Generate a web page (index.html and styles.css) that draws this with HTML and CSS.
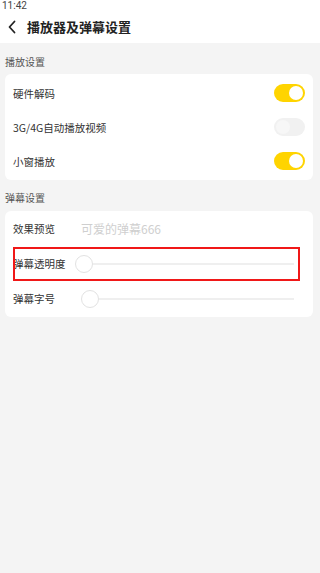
FILE: index.html
```html
<!DOCTYPE html>
<html lang="zh-CN">
<head>
<meta charset="utf-8">
<link rel="stylesheet" href="styles.css">
</head>
<body>
<div class="top">
  <div class="status">11:42</div>
  <div class="header">
    <svg class="back" width="8" height="14" viewBox="0 0 8 14"><path d="M6.5 1.5 L1.5 7 L6.5 12.5" fill="none" stroke="#222" stroke-width="1.8" stroke-linecap="round" stroke-linejoin="round"/></svg>
    <div class="title">播放器及弹幕设置</div>
  </div>
</div>
<div class="section-label first">播放设置</div>
<div class="card card-a">
  <div class="row row-a"><span class="label">硬件解码</span><span class="toggle on"><span class="knob"></span></span></div>
  <div class="row row-a"><span class="label">3G/4G自动播放视频</span><span class="toggle off"><span class="knob"></span></span></div>
  <div class="row row-a"><span class="label">小窗播放</span><span class="toggle on"><span class="knob"></span></span></div>
</div>
<div class="section-label">弹幕设置</div>
<div class="card card-b">
  <div class="row row-b"><span class="label">效果预览</span><span class="preview">可爱的弹幕666</span></div>
  <div class="row row-b highlight-row"><span class="label">弹幕透明度</span><span class="slider s1"><span class="thumb"></span><span class="track"></span></span><span class="highlight"></span></div>
  <div class="row row-b"><span class="label">弹幕字号</span><span class="slider s2"><span class="thumb"></span><span class="track"></span></span></div>
</div>
</body>
</html>
```
FILE: styles.css
```css
* { box-sizing: border-box; }
html, body { margin: 0; padding: 0; }
body {
  width: 320px;
  height: 573px;
  background: #f4f4f4;
  font-family: "Noto Sans CJK SC", "Noto Sans", sans-serif;
  color: #333;
  overflow: hidden;
}
.top { background: #fff; height: 43px; }
.status {
  font-family: Roboto, "Noto Sans", sans-serif;
  font-size: 10px;
  line-height: 11px;
  color: #444;
  padding-left: 2px;
}
.header {
  display: flex;
  align-items: center;
  height: 32px;
  padding-left: 8px;
  padding-bottom: 1px;
}
.back { margin-right: 11px; }
.title {
  font-size: 13px;
  font-weight: 700;
  color: #222;
  line-height: 18px;
}
.section-label {
  font-size: 10px;
  color: #555;
  line-height: 12px;
  padding-left: 5px;
  margin-top: 12px;
  margin-bottom: 7px;
}
.section-label.first { margin-top: 13px; margin-bottom: 6px; }
.card {
  background: #fff;
  margin: 0 7px 0 5px;
  border-radius: 6px;
}
.card-a { padding: 2px 0; }
.card-b { padding: 0 0 1px 0; }
.row {
  display: flex;
  align-items: center;
  padding-left: 8px;
  position: relative;
}
.row-a { height: 34px; padding-right: 8px; justify-content: space-between; }
.row-b { height: 35px; padding-right: 19px; }
.label { font-size: 10.5px; color: #333; }
.preview { font-size: 12px; color: #cfcfcf; margin-left: 26px; }
.toggle {
  width: 31px;
  height: 18px;
  border-radius: 9px;
  position: relative;
  display: block;
}
.toggle.on { background: #ffd400; }
.toggle.off { background: #f1f1f1; }
.knob {
  position: absolute;
  top: 2px;
  width: 14px;
  height: 14px;
  border-radius: 50%;
}
.toggle.on .knob { right: 2px; background: #fff; }
.toggle.off .knob { left: 2px; background: #f7f7f7; }
.slider {
  flex: 1;
  display: flex;
  align-items: center;
}
.s1 { margin-left: 9px; }
.s2 { margin-left: 26px; }
.thumb {
  width: 18px;
  height: 18px;
  border-radius: 50%;
  border: 1px solid #e2e2e2;
  background: #fff;
  flex: none;
}
.track {
  flex: 1;
  height: 2px;
  background: #efefef;
}
.highlight {
  position: absolute;
  left: 8px;
  top: 1px;
  width: 287px;
  height: 34px;
  border: 2px solid #f01818;
  pointer-events: none;
}
```
